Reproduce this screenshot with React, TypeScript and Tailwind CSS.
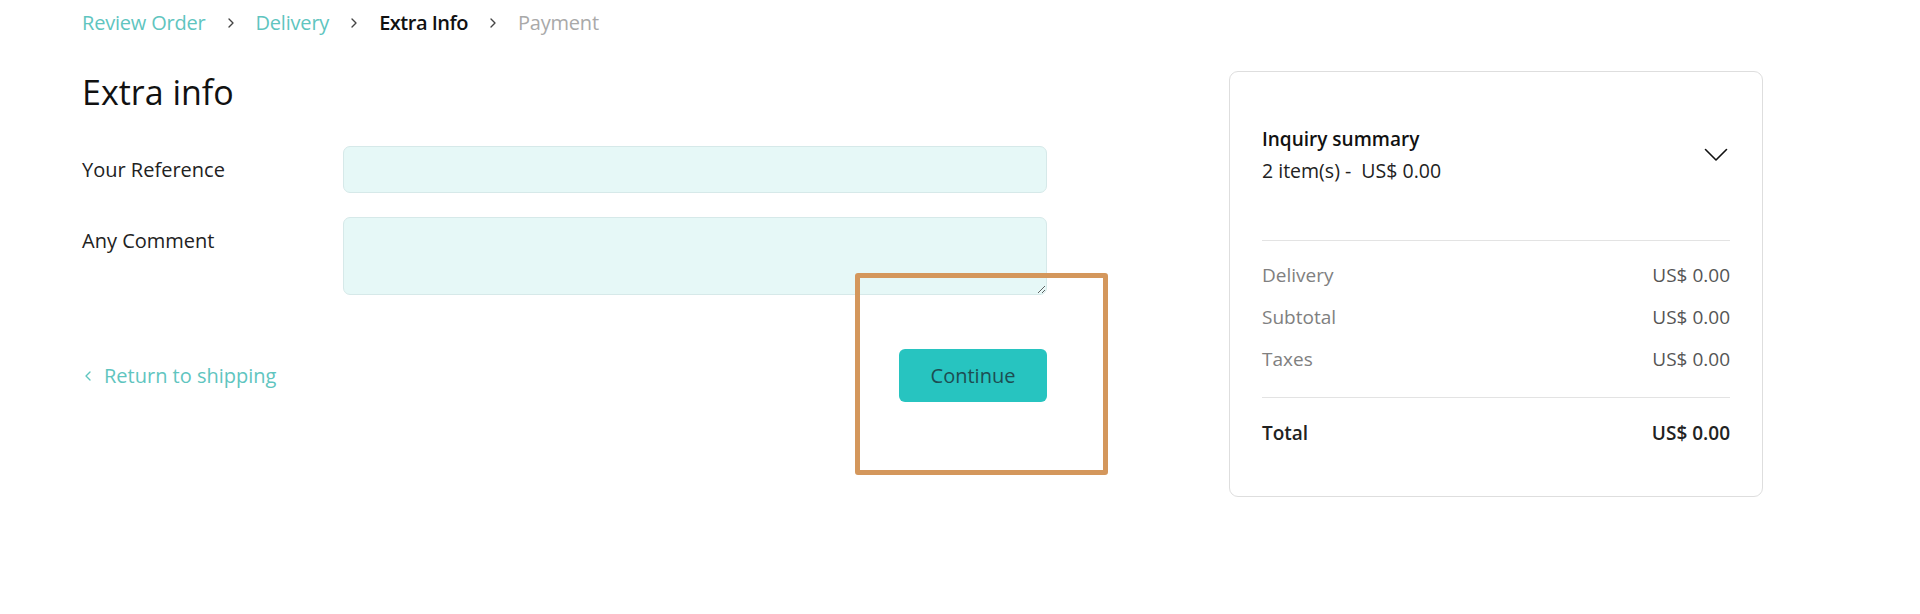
import React from "react";
import { ChevronLeft, ChevronRight } from "lucide-react";

const font = { fontFamily: '"Open Sans", "Noto Sans", Arial, sans-serif' };

function Row({ label, value }: { label: string; value: string }) {
  return (
    <div className="flex h-[42px] items-center justify-between text-[19px]">
      <span className="text-[#808080]">{label}</span>
      <span className="text-[#555555]">{value}</span>
    </div>
  );
}

function Sep() {
  return <ChevronRight className="mx-[17px] text-[#444]" size={16} strokeWidth={2} />;
}

export default function App() {
  return (
    <div className="relative min-h-[614px] w-full bg-white" style={font}>
      <div className="flex gap-[182px] pl-[82px]">
        {/* Left column */}
        <div className="w-[965px]">
          <nav className="flex h-[46px] items-center text-[20px] tracking-[-0.2px]">
            <span className="text-[#5fc5bf]">Review Order</span>
            <Sep />
            <span className="text-[#5fc5bf]">Delivery</span>
            <Sep />
            <span className="font-semibold tracking-[-0.5px] text-[#111]">Extra Info</span>
            <Sep />
            <span className="text-[#a9a9a9]">Payment</span>
          </nav>

          <h1 className="mt-[26px] text-[34px] leading-[40px] text-[#111]">Extra info</h1>

          <div className="mt-[34px] flex items-start">
            <label className="flex h-[47px] w-[261px] items-center text-[20px] text-[#222]">
              Your Reference
            </label>
            <input
              className="h-[47px] w-[704px] rounded-[7px] border border-[#d6e9e9] bg-[#e6f8f7] px-4 outline-none"
              type="text"
            />
          </div>

          <div className="mt-[24px] flex items-start">
            <label className="flex h-[47px] w-[261px] items-center text-[20px] text-[#222]">
              Any Comment
            </label>
            <textarea className="block h-[78px] w-[704px] rounded-[7px] border border-[#d6e9e9] bg-[#e6f8f7] px-4 py-2 outline-none" />
          </div>

          <div className="mt-[54px] flex items-center justify-between">
            <a className="flex items-center text-[20px] text-[#5fc5bf]" href="#">
              <ChevronLeft size={16} strokeWidth={2} className="mr-[8px] ml-[-2px]" />
              Return to shipping
            </a>
            <button className="h-[53px] w-[148px] rounded-[6px] bg-[#27c4c0] text-[20px] text-[#1d4d52]">
              Continue
            </button>
          </div>
        </div>

        {/* Right card */}
        <div className="mt-[71px] h-[426px] w-[534px] rounded-[9px] border border-[#dedede] px-[32px] pt-[51px]">
          <div className="flex items-center justify-between">
            <div>
              <div className="text-[19px] leading-[32px] font-semibold text-[#111]">Inquiry summary</div>
              <div className="text-[19.5px] leading-[32px] text-[#222]">2 item(s) - &nbsp;US$ 0.00</div>
            </div>
            <svg width="24" height="14" viewBox="0 0 24 14" className="mr-[2px]" fill="none">
              <polyline points="1.5,1.5 12,12 22.5,1.5" stroke="#111" strokeWidth="1.6" strokeLinecap="round" strokeLinejoin="round" />
            </svg>
          </div>
          <div className="mt-[53px] border-t border-[#e3e3e3]" />
          <div className="mt-[13px]">
            <Row label="Delivery" value="US$ 0.00" />
            <Row label="Subtotal" value="US$ 0.00" />
            <Row label="Taxes" value="US$ 0.00" />
          </div>
          <div className="mt-[17px] border-t border-[#e3e3e3]" />
          <div className="mt-[18px] flex h-[34px] items-center justify-between text-[19px] font-semibold text-[#222]">
            <span>Total</span>
            <span>US$ 0.00</span>
          </div>
        </div>
      </div>

      {/* highlight overlay */}
      <div className="pointer-events-none absolute left-[855px] top-[273px] h-[202px] w-[253px] rounded-[3px] border-[5px] border-[#d4975c]" />
    </div>
  );
}
